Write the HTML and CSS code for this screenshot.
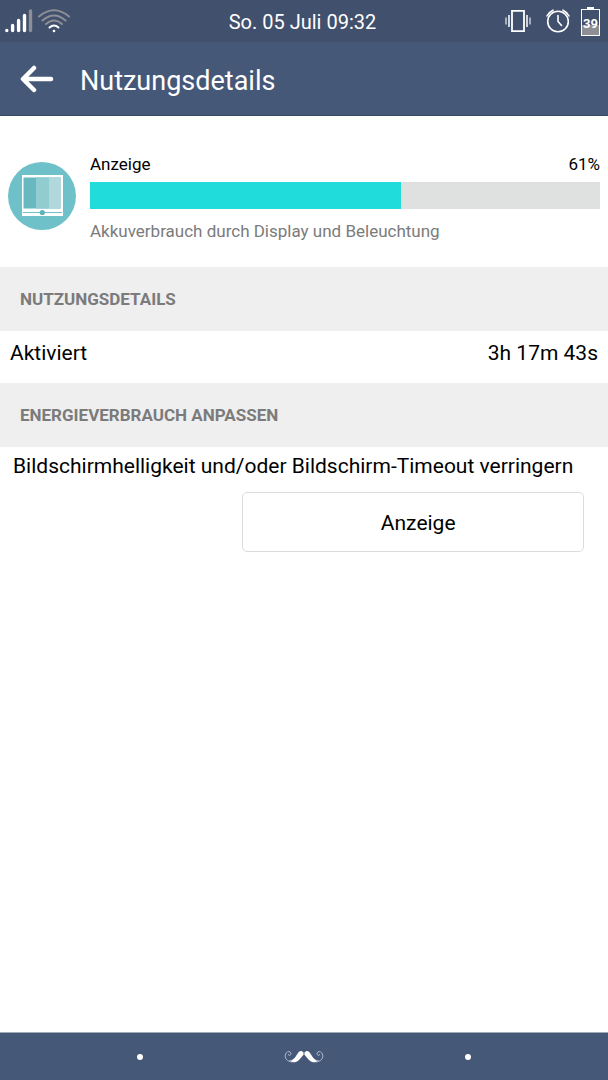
FILE: index.html
```html
<!DOCTYPE html>
<html lang="de">
<head>
<meta charset="utf-8">
<meta name="viewport" content="width=device-width, initial-scale=1">
<title>Nutzungsdetails</title>
<link rel="stylesheet" href="styles.css">
</head>
<body>
<div class="status">
  <div class="status-side">
    <svg class="signal" width="28" height="24" viewBox="0 0 28 24" fill="none" stroke="#fff" stroke-width="3.4" stroke-linecap="round" aria-hidden="true">
      <path d="M1.8 21.5v.1M7.6 16.5v5M13.6 11.5v10M19.5 6.5v15"/>
      <path d="M25.5 2v19.5" stroke="#8d8f95"/>
    </svg>
    <svg class="wifi" width="32" height="24" viewBox="0 0 32 24" fill="none" stroke="#8d8f95" stroke-width="2" stroke-linecap="round" aria-hidden="true">
      <path d="M1 7.5Q16-5 31 7.5M4.5 11.5Q16 1.5 27.5 11.5M8 15Q16 8 24 15"/>
      <path d="M11.5 18.5Q16 14.5 20.5 18.5" stroke="#fff"/>
      <circle cx="16" cy="22" r="1.3" fill="#fff" stroke="none"/>
    </svg>
  </div>
  <time class="clock">So. 05 Juli 09:32</time>
  <div class="status-side status-right">
    <svg class="vibrate" width="26" height="24" viewBox="0 0 26 24" fill="none" stroke="#fff" aria-hidden="true">
      <path d="M7 1.8h12v20.4H7z" stroke-width="1.8"/>
      <path d="M4 6v12M22 6v12" stroke-width="1.5"/>
      <path d="M1 8.5v7M25 8.5v7" stroke-width="1.5" stroke="#c7ccd6"/>
    </svg>
    <svg class="alarm" width="24" height="24" viewBox="0 0 24 24" fill="none" stroke="#fff" stroke-width="1.6" stroke-linecap="round" aria-hidden="true">
      <circle cx="12" cy="12.5" r="10.3"/>
      <path d="M12 6.500v6l3.500 4M1 7Q3 3 7 1.200M17 1.200Q21 3 23 7"/>
    </svg>
    <div class="battery">39</div>
  </div>
</div>
<header class="header">
  <button class="back" type="button" aria-label="Zurück">
    <svg width="34" height="28" viewBox="0 0 34 28" fill="none" stroke="#fff" stroke-width="4.5" stroke-linecap="round" stroke-linejoin="round" aria-hidden="true"><path d="M31 14H3.500M14 3L3 14l11 11"/></svg>
  </button>
  <h1 class="title">Nutzungsdetails</h1>
</header>
<main class="content">
  <section class="usage">
    <svg class="usage-icon" width="68" height="68" viewBox="0 0 68 68" aria-hidden="true">
      <circle cx="34" cy="34" r="34" fill="#6ec1c8"/>
      <path d="M14 13h41v41H14z" fill="#fff"/>
      <path d="M15.500 15.500h37v31h-37z" fill="#67b8bf"/>
      <path d="M28 15.500h13v31H28z" fill="#91ccd0"/>
      <path d="M41 15.500h12v31H41z" fill="#b1d9dc"/>
      <path d="M15 50.500h39" stroke="#6ec1c8" stroke-width="1.2"/>
      <circle cx="34.3" cy="50.5" r="2.6" fill="#5eb3bb"/>
    </svg>
    <div class="usage-info">
      <div class="usage-head"><span id="usage-name">Anzeige</span><span>61%</span></div>
      <div class="bar" role="progressbar" aria-labelledby="usage-name" aria-valuenow="61" aria-valuemin="0" aria-valuemax="100"><div class="bar-fill" style="width:61%"></div></div>
      <p class="usage-text">Akkuverbrauch durch Display und Beleuchtung</p>
    </div>
  </section>
  <h2 class="section-title">NUTZUNGSDETAILS</h2>
  <div class="row"><span>Aktiviert</span><span>3h 17m 43s</span></div>
  <h2 class="section-title">ENERGIEVERBRAUCH ANPASSEN</h2>
  <p class="hint">Bildschirmhelligkeit und/oder Bildschirm-Timeout verringern</p>
  <div class="actions"><button class="action" type="button">Anzeige</button></div>
</main>
<nav class="nav">
  <button class="nav-button" type="button" aria-label="Menü"><span class="dot"></span></button>
  <button class="nav-button" type="button" aria-label="Startseite">
    <svg width="40" height="14" viewBox="0 0 40 14" aria-hidden="true">
      <g id="half">
        <path d="M5 10.500C9 11 11 7.500 13 4.500C14.500 2 16 .8 17.800 1.200C19.500 1.600 20 3 19.400 5C18 6 17 8 15 10C12 13 8 13 5 10.500z" fill="#fff"/>
        <path d="M8 12C3.500 11.500 1.200 9 1.200 6C1.200 3 3 1.600 5 1.600C7 1.600 7.700 4 6.200 5.200C5 6 4 5 4.600 4" fill="none" stroke="#aab5c8"/>
      </g>
      <use href="#half" transform="translate(40 0) scale(-1 1)"/>
    </svg>
  </button>
  <button class="nav-button" type="button" aria-label="Zurück"><span class="dot"></span></button>
</nav>
</body>
</html>
```

FILE: styles.css
```css
* { box-sizing: border-box; }
body {
  margin: 0;
  min-height: 100vh;
  display: flex;
  flex-direction: column;
  background: #fff;
  color: #000;
  font-family: Roboto, "Liberation Sans", sans-serif;
}
h1, h2, p { margin: 0; }
button { font: inherit; border: 0; padding: 0; background: none; }
svg { display: block; flex: none; }

.status {
  display: grid;
  grid-template-columns: 1fr auto 1fr;
  align-items: center;
  height: 42px;
  padding: 0 8px 0 5px;
  background: #41506d;
  color: #fff;
}
.status-side { display: flex; align-items: center; gap: 5px; }
.status-right { justify-content: flex-end; gap: 15px; }
.clock { padding-top: 2px; font-size: 20px; line-height: 24px; }
.battery {
  position: relative;
  width: 19px;
  height: 27px;
  margin-top: 3px;
  margin-left: -4px;
  border: 1px solid #fff;
  background: linear-gradient(#41506d 60%, #8d8f95 60%);
  font-size: 13px;
  font-weight: 700;
  line-height: 27px;
  display: flex;
  justify-content: center;
}
.battery::before {
  content: "";
  position: absolute;
  top: -3px;
  left: 5px;
  width: 7px;
  height: 3px;
  background: #fff;
}

.header {
  display: flex;
  align-items: center;
  gap: 26px;
  height: 74px;
  padding: 0 20px;
  background: #465878;
  color: #fff;
  border-bottom: 1px solid #3a4963;
}
.title { padding-top: 4px; font-size: 27px; font-weight: 400; line-height: 32px; }

.content { flex: 1; }
.usage {
  display: flex;
  align-items: center;
  gap: 14px;
  height: 151px;
  padding: 8px 8px 0;
}
.usage-info { flex: 1; padding-top: 4px; font-size: 17px; line-height: 20px; }
.usage-head { display: flex; justify-content: space-between; }
.bar { height: 27px; margin: 8px 0 12px; background: #dfe1e0; }
.bar-fill { height: 100%; background: #20dcdb; }
.usage-text { color: #7b7b7b; }

.section-title {
  padding: 22px 20px;
  background: #efefef;
  color: #7b7b7b;
  font-size: 17px;
  font-weight: 700;
  line-height: 20px;
}
.row {
  display: flex;
  justify-content: space-between;
  padding: 10px 10px 18px;
  font-size: 21px;
  line-height: 24px;
}
.hint { padding: 7px 13px; font-size: 21px; line-height: 24px; }
.actions { display: flex; justify-content: flex-end; padding: 7px 24px; }
.action {
  width: 61%;
  height: 60px;
  padding: 2px 0 0 10px;
  border: 1px solid #dcdcdc;
  border-radius: 5px;
  background: #fff;
  color: #000;
  font-size: 21px;
}

.nav {
  display: flex;
  justify-content: center;
  height: 48px;
  border-top: 1px solid #a2abbb;
  background: #465878;
}
.nav-button {
  width: 27%;
  display: flex;
  align-items: center;
  justify-content: center;
}
.dot { width: 6px; height: 6px; border-radius: 50%; background: #fff; }
```
